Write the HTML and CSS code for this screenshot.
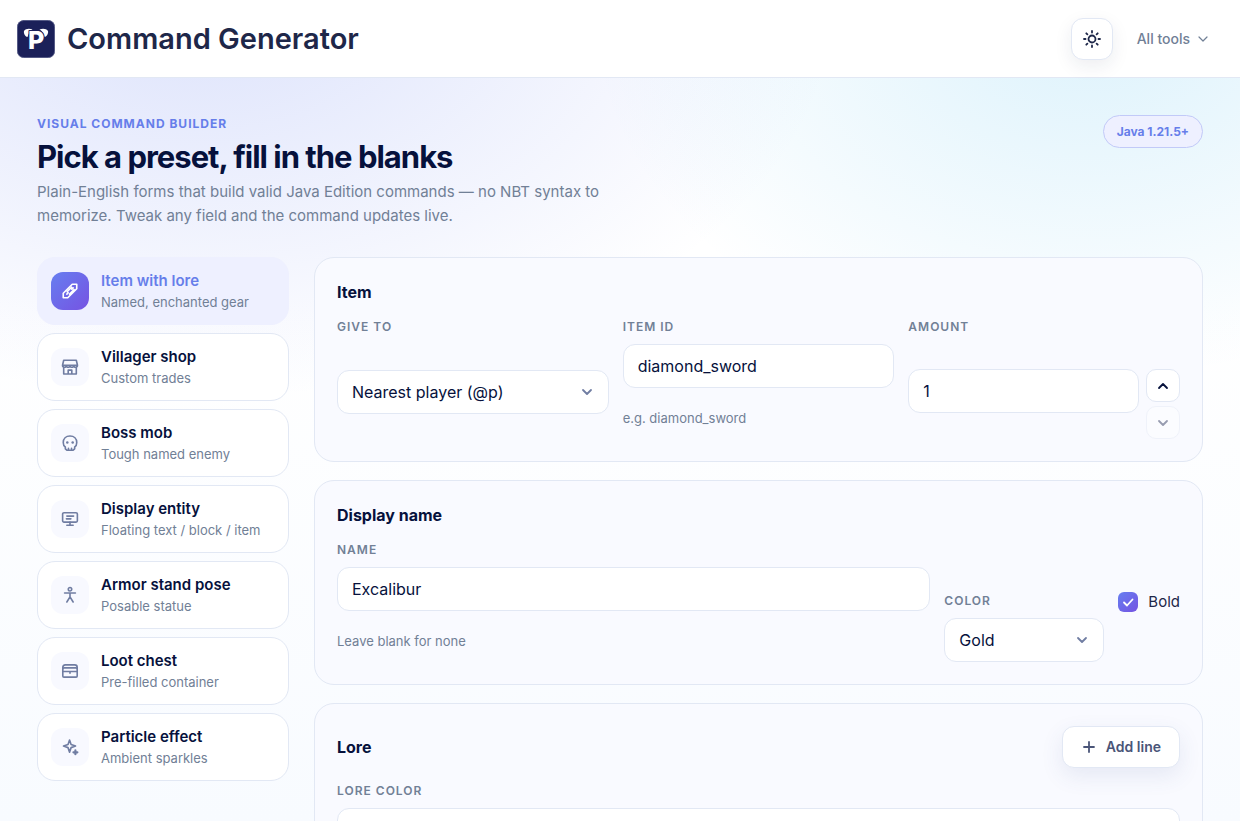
FILE: index.html
```html
<!DOCTYPE html>
<html lang="en">
<head>
<meta charset="utf-8">
<title>Command Generator</title>
<meta name="viewport" content="width=device-width,initial-scale=1">
<link rel="stylesheet" href="styles.css">
</head>
<body>
  <header class="topbar">
    <a class="brand" href="#">
      <svg class="brand-logo" viewBox="0 0 38 38" aria-hidden="true">
        <rect x="0.5" y="0.5" width="37" height="37" rx="6" fill="#1b2059" stroke="#555a86"/>
        <path d="M7 11C8.500 8.500 12.500 8 15.500 9.500C12.500 11 11.800 13.500 10.500 17C8 16.500 6.500 13.500 7 11ZM31 11C29.500 8.500 25.500 8 22.500 9.500C25.500 11 26.200 13.500 27.500 17C30 16.500 31.500 13.500 31 11Z" fill="#fff" stroke="none"/>
        <text class="brand-letter" x="11" y="29">P</text>
      </svg>
      <span class="brand-name">Command Generator</span>
    </a>
    <div class="topbar-actions">
      <button class="theme-btn" type="button" aria-label="Toggle theme">
        <svg viewBox="0 0 20 20" class="icon-20"><circle cx="10" cy="10" r="3.500"/><path d="M10 2v1.500M10 16.500V18M2 10h1.500M16.500 10H18M4.300 4.300l1.100 1.100M14.600 14.600l1.100 1.100M4.300 15.700l1.100-1.100M14.600 5.400l1.100-1.100"/></svg>
      </button>
      <button class="tools-btn" type="button">All tools
        <svg viewBox="0 0 12 12" class="icon-12"><path d="M2 4l4 4 4-4"/></svg>
      </button>
    </div>
  </header>

  <main class="page">
    <div class="hero">
      <div class="hero-text">
        <p class="eyebrow">Visual command builder</p>
        <h1>Pick a preset, fill in the blanks</h1>
        <p class="lead">Plain-English forms that build valid Java Edition commands — no NBT syntax to memorize. Tweak any field and the command updates live.</p>
      </div>
      <span class="version">Java 1.21.5+</span>
    </div>

    <div class="builder">
      <nav class="presets" aria-label="Presets">
        <button class="preset active" type="button">
          <span class="preset-icon"><svg viewBox="0 0 20 20"><path d="M2.500 17.500v-5L12.500 2.500h5v5L7.500 17.500zM6.500 13.500l1.500-1.500M9.500 13.500l5-5M6.800 10.800l5-5M12 8l1.500-1.500"/></svg></span>
          <span class="preset-text"><b>Item with lore</b><small>Named, enchanted gear</small></span>
        </button>
        <button class="preset" type="button">
          <span class="preset-icon"><svg viewBox="0 0 20 20"><path d="M3 2.500h14l1.300 5.500H1.700zM3 10v7.800h14V10M8 17.800V13.500h4v4.300M1.700 8c0 3 4.100 3 4.100 0 0 3 4.200 3 4.200 0 0 3 4.200 3 4.200 0 0 3 4.100 3 4.100 0"/></svg></span>
          <span class="preset-text"><b>Villager shop</b><small>Custom trades</small></span>
        </button>
        <button class="preset" type="button">
          <span class="preset-icon"><svg viewBox="0 0 20 20"><path d="M4.800 14.500C3 13.500 2.500 12 2.500 9.500C2.500 5 5.500 2.200 10 2.200S17.500 5 17.500 9.500C17.500 12 17 13.500 15.200 14.500V16.500L13.500 18h-7L4.800 16.500zM8.300 15.800V18M11.700 15.800V18"/><circle cx="7" cy="9.500" r="1.400" class="dot"/><circle cx="13" cy="9.500" r="1.400" class="dot"/></svg></span>
          <span class="preset-text"><b>Boss mob</b><small>Tough named enemy</small></span>
        </button>
        <button class="preset" type="button">
          <span class="preset-icon"><svg viewBox="0 0 20 20"><rect x="1.800" y="3" width="16.400" height="10.500" rx="1.500"/><path d="M10 13.500V17M6.500 17h7M6.500 6.800h7.500M6 9.800h5"/></svg></span>
          <span class="preset-text"><b>Display entity</b><small>Floating text / block / item</small></span>
        </button>
        <button class="preset" type="button">
          <span class="preset-icon"><svg viewBox="0 0 20 20"><circle cx="10" cy="3.600" r="1.900"/><path d="M4 7.800h12M10 7.800v4.200M6.500 17.800L10 12l3.500 5.800"/></svg></span>
          <span class="preset-text"><b>Armor stand pose</b><small>Posable statue</small></span>
        </button>
        <button class="preset" type="button">
          <span class="preset-icon"><svg viewBox="0 0 20 20"><path d="M2 7.500V6Q2 3.200 4.800 3.200h10.400Q18 3.200 18 6v1.500"/><rect x="2" y="6.500" width="16" height="10.300" rx="1.200"/><path d="M2 10.500h16M10 10.500v2"/></svg></span>
          <span class="preset-text"><b>Loot chest</b><small>Pre-filled container</small></span>
        </button>
        <button class="preset" type="button">
          <span class="preset-icon"><svg viewBox="0 0 20 20"><path d="M9.500 2.300L11.200 7.300 16.200 9 11.200 10.700 9.500 15.700 7.800 10.700 2.800 9 7.800 7.300z"/><path d="M16 13.700v4.400M13.800 15.900h4.400" class="thick"/></svg></span>
          <span class="preset-text"><b>Particle effect</b><small>Ambient sparkles</small></span>
        </button>
      </nav>

      <form class="cards">
        <section class="card">
          <h2>Item</h2>
          <div class="item-grid">
            <div class="field">
              <label for="give-to">Give to</label>
              <div class="control control-middle">
                <select id="give-to"><option>Nearest player (@p)</option><option>All players (@a)</option></select>
              </div>
            </div>
            <div class="field">
              <label for="item-id">Item ID</label>
              <div class="control">
                <input id="item-id" type="text" value="diamond_sword">
                <p class="hint">e.g. diamond_sword</p>
              </div>
            </div>
            <div class="field">
              <label for="amount">Amount</label>
              <div class="control control-end">
                <div class="number">
                  <input id="amount" type="text" inputmode="numeric" value="1">
                  <div class="stepper">
                    <button type="button" aria-label="Increase"><svg viewBox="0 0 12 12" class="icon-12"><path d="M2 8l4-4 4 4"/></svg></button>
                    <button type="button" aria-label="Decrease" disabled><svg viewBox="0 0 12 12" class="icon-12"><path d="M2 4l4 4 4-4"/></svg></button>
                  </div>
                </div>
              </div>
            </div>
          </div>
        </section>

        <section class="card">
          <h2>Display name</h2>
          <div class="name-row">
            <div class="field grow">
              <label for="name">Name</label>
              <div class="control">
                <input id="name" type="text" value="Excalibur">
                <p class="hint">Leave blank for none</p>
              </div>
            </div>
            <div class="field field-color">
              <label for="color">Color</label>
              <select id="color"><option>Gold</option><option>Red</option><option>Aqua</option></select>
            </div>
            <label class="check"><input type="checkbox" checked>Bold</label>
          </div>
        </section>

        <section class="card">
          <div class="card-head">
            <h2>Lore</h2>
            <button class="add-btn" type="button"><svg viewBox="0 0 12 12" class="icon-12"><path d="M6 1v10M1 6h10"/></svg>Add line</button>
          </div>
          <div class="field">
            <label for="lore-color">Lore color</label>
            <select id="lore-color"><option>Gray</option><option>Gold</option></select>
          </div>
        </section>
      </form>
    </div>
  </main>
</body>
</html>
```

FILE: styles.css
```css
:root {
  --ink: #06113c;
  --navy: #1e2749;
  --muted: #718096;
  --line: #e2e8f4;
  --accent: #667eea;
  --grad: linear-gradient(135deg, #667ef0, #7653e2);
}

* { box-sizing: border-box; }
html { background: #fbfcff; }
body {
  margin: 0;
  min-height: 100vh;
  font: 16px/24px Inter, sans-serif;
  color: var(--ink);
  background:
    radial-gradient(ellipse 640px 400px at 16% 0, rgba(99, 126, 240, 0.22), transparent),
    radial-gradient(ellipse 500px 360px at 88% 20px, rgba(14, 165, 233, 0.14), transparent),
    linear-gradient(180deg, #fff 0, #fff 300px, #f8fbff 820px) no-repeat;
}
h1, h2, p { margin: 0; }
button, input, select { font: inherit; color: inherit; }
button { cursor: pointer; }
svg { display: block; fill: none; stroke: currentColor; stroke-width: 1.8; stroke-linecap: round; stroke-linejoin: round; }
.icon-20 { width: 20px; height: 20px; }
.icon-12 { width: 12px; height: 12px; }

/* top bar */
.topbar { display: flex; align-items: center; justify-content: space-between; height: 78px; padding: 0 31px 0 17px; background: #fff; border-bottom: 1px solid var(--line); }
.brand { display: flex; align-items: center; gap: 12px; color: var(--navy); text-decoration: none; }
.brand-logo { width: 38px; height: 38px; stroke-width: 1; }
.brand-letter { font-size: 25px; font-weight: 800; fill: #fff; stroke: #1b2059; stroke-width: 2; paint-order: stroke; }
.brand-name { font-size: 29px; font-weight: 600; line-height: 36px; }
.topbar-actions { display: flex; align-items: center; gap: 24px; }
.theme-btn { display: grid; place-items: center; width: 42px; height: 42px; padding: 0; color: var(--navy); background: #fff; border: 1px solid var(--line); border-radius: 12px; box-shadow: 0 6px 18px rgba(30, 39, 73, 0.08); }
.tools-btn { display: flex; align-items: center; gap: 7px; padding: 0; color: var(--muted); font-size: 14px; font-weight: 500; background: none; border: 0; }
.tools-btn svg { stroke-width: 1.2; }

/* hero */
.page { padding: 37px; }
.hero { display: flex; justify-content: space-between; align-items: flex-start; margin-bottom: 29px; }
.hero-text { max-width: 620px; }
.eyebrow { color: var(--accent); font-size: 12px; font-weight: 700; line-height: 18px; letter-spacing: 1px; text-transform: uppercase; }
h1 { font-size: 31px; font-weight: 700; line-height: 47px; letter-spacing: -1px; }
.lead { color: var(--muted); font-size: 15px; }
.version { padding: 0 13px; color: var(--accent); font-size: 12px; font-weight: 700; line-height: 31px; background: #eef0ff; border: 1px solid #c2caf8; border-radius: 17px; white-space: nowrap; }

.builder { display: grid; grid-template-columns: 252px 1fr; gap: 25px; align-items: start; }

/* preset list */
.presets { display: grid; gap: 8px; }
.preset { display: flex; align-items: center; gap: 12px; height: 68px; padding: 0 13px; text-align: left; background: #fff; border: 1px solid var(--line); border-radius: 18px; }
.preset-icon { display: grid; place-items: center; flex: none; width: 38px; height: 38px; color: #707da2; background: #f8f9ff; border-radius: 12px; }
.preset-icon svg { width: 18px; height: 18px; }
.preset-icon .dot { fill: currentColor; stroke: none; }
.preset-icon .thick { stroke-width: 2.4; }
.preset-text b { display: block; font-size: 15px; font-weight: 600; line-height: 22px; }
.preset-text small { display: block; color: var(--muted); font-size: 13px; line-height: 20px; }
.preset.active { background: #eef0ff; border-color: #eef0ff; }
.preset.active b { color: var(--accent); }
.preset.active .preset-icon { color: #fff; background: var(--grad); }

/* form cards */
.cards { display: grid; gap: 18px; min-width: 0; }
.card { padding: 22px; background: #f9faff; border: 1px solid var(--line); border-radius: 20px; }
h2 { margin-bottom: 15px; font-size: 16px; font-weight: 700; line-height: 24px; }
.card-head { display: flex; align-items: center; justify-content: space-between; margin-bottom: 15px; }
.card-head h2 { margin: 0; }
.item-grid { display: grid; grid-template-columns: repeat(3, minmax(0, 1fr)); gap: 14px; }
.name-row { display: flex; gap: 14px; align-items: flex-end; }
.grow { flex: 1; }
.field { display: flex; flex-direction: column; gap: 9px; }
.field > label { color: var(--muted); font-size: 12px; font-weight: 600; line-height: 16px; letter-spacing: 1px; text-transform: uppercase; }
.field-color { width: 160px; }
.control { display: flex; flex-direction: column; min-height: 95px; }
.control-middle { justify-content: center; }
.control-end { justify-content: flex-end; }
input[type=text], select { width: 100%; height: 44px; padding: 0 14px; background-color: #fff; border: 1px solid var(--line); border-radius: 12px; }
select { appearance: none; background: #fff url("data:image/svg+xml,%3Csvg xmlns='http://www.w3.org/2000/svg' viewBox='0 0 12 12' fill='none' stroke='%23707da2' stroke-width='1.800' stroke-linecap='round' stroke-linejoin='round'%3E%3Cpath d='M2 4l4 4 4-4'/%3E%3C/svg%3E") no-repeat right 15px center / 12px 12px; }
.hint { margin-top: 20px; color: var(--muted); font-size: 13px; line-height: 20px; }
.number { display: flex; align-items: flex-start; gap: 7px; }
.number input { flex: 1; min-width: 0; }
.stepper { display: grid; gap: 4px; }
.stepper button { display: grid; place-items: center; width: 34px; height: 33px; padding: 0; color: var(--ink); background: #fff; border: 1px solid var(--line); border-radius: 10px; }
.stepper button:disabled { opacity: 0.4; cursor: default; }
.check { display: flex; align-items: center; align-self: center; gap: 10px; font-size: 15px; color: var(--navy); }
.check input { appearance: none; width: 20px; height: 20px; margin: 0; border-radius: 6px; background: #fff; border: 1px solid var(--line); }
.check input:checked { border: 0; background: url("data:image/svg+xml,%3Csvg xmlns='http://www.w3.org/2000/svg' viewBox='0 0 20 20' fill='none' stroke='white' stroke-width='1.800' stroke-linecap='round' stroke-linejoin='round'%3E%3Cpath d='M6 10.500l3 3 5.500-6'/%3E%3C/svg%3E"), var(--grad); }
.add-btn { display: flex; align-items: center; gap: 11px; height: 42px; padding: 0 18px 0 20px; color: #4a5578; font-size: 14px; font-weight: 600; background: #fff; border: 1px solid var(--line); border-radius: 12px; box-shadow: 0 8px 22px rgba(60, 80, 150, 0.1); }
```
